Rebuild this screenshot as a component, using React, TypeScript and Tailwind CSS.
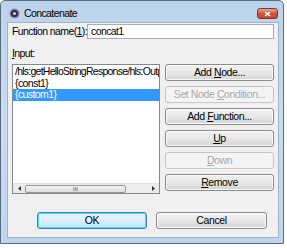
import React from "react";

const font = { fontFamily: '"Liberation Sans", Arial, sans-serif' };

function Btn({ children, disabled, def }: { children: React.ReactNode; disabled?: boolean; def?: boolean }) {
  const base =
    "h-[17px] flex items-center justify-center rounded-[3px] text-[10.5px] tracking-[-0.4px] leading-none whitespace-nowrap";
  if (disabled)
    return (
      <div className={base + " border border-[#c4c7c9] bg-[#f4f4f4] text-[#a8a8a8]"}><span>{children}</span></div>
    );
  if (def)
    return (
      <div className={base + " border border-[#3c7fb1] bg-gradient-to-b from-[#eaf6fd] via-[#d9f0fc] to-[#bee6fd] text-black shadow-[inset_0_0_0_1px_#48d8f8]"}>
        <span>{children}</span>
      </div>
    );
  return (
    <div className={base + " border border-[#8a8a8a] bg-gradient-to-b from-[#f2f2f2] via-[#e8e8e8] to-[#d4d4d4] text-black shadow-[inset_0_0_0_1px_#fcfcfc]"}>
      <span>{children}</span>
    </div>
  );
}

export default function App() {
  return (
    <div className="w-[287px] h-[248px] bg-white relative text-[10.5px] tracking-[-0.6px]" style={font}>
      <div className="w-[284px] h-[244px] flex flex-col rounded-t-[5px] border border-[#5a6b7c] bg-gradient-to-b from-[#bcd3ec] via-[#c8dcf1] to-[#bed5ee]">
        {/* title bar */}
        <div className="h-[21px] flex items-center pl-[8px] pr-[5px] shrink-0 pt-[4px]">
          <svg width="11" height="11" viewBox="0 0 11 11">
            <circle cx="5.5" cy="5.5" r="5" fill="#8a7fb0" />
            <circle cx="5.5" cy="5.5" r="3.6" fill="#2e2e3e" />
            <circle cx="5.5" cy="5.5" r="1.6" fill="#cfc6ea" />
          </svg>
          <span className="ml-[4px] text-black">Concatenate</span>
          <div className="ml-auto w-[21px] h-[11px] rounded-[3px] border border-[#7a3a2e] bg-gradient-to-b from-[#e8a493] via-[#d0543a] to-[#c8442c] flex items-center justify-center">
            <svg width="7" height="6" viewBox="0 0 7 6">
              <path d="M1 1 L6 5 M6 1 L1 5" stroke="white" strokeWidth="1.6" />
            </svg>
          </div>
        </div>
        {/* content */}
        <div className="flex-1 ml-[6px] mr-[4px] mb-[5px] bg-[#f0f0f0] border border-[#9fb4cc] flex flex-col px-[4px]">
          <div className="flex items-center mt-[1px] h-[15px]">
            <span className="text-black w-[75px] whitespace-nowrap">
              Function name(<span className="underline">1</span>):
            </span>
            <div className="flex-1 h-[15px] bg-white border border-[#ababab] flex items-center pl-[3px]">
              concat1
            </div>
          </div>
          <div className="mt-[8px] h-[13px] leading-[13px]">
            <span className="underline">I</span>nput:
          </div>
          <div className="flex mt-[4px] gap-[5px]">
            <div className="w-[148px] h-[130px] bg-white border border-[#828790] flex flex-col overflow-hidden">
              <div className="flex-1 pt-[1px] leading-[11.5px]">
                <div className="pl-[2px] whitespace-nowrap tracking-[-0.75px]">/hls:getHelloStringResponse/hls:Outp</div>
                <div className="pl-[2px]">{"{const1}"}</div>
                <div className="pl-[2px] bg-[#3399ff] text-white">{"{custom1}"}</div>
              </div>
              <div className="h-[10px] flex items-center bg-[#ececec] border-t border-[#e2e2e2]">
                <div className="w-[12px] flex justify-center">
                  <svg width="3" height="5" viewBox="0 0 3 5"><path d="M3 0 L0 2.5 L3 5Z" fill="#333" /></svg>
                </div>
                <div className="w-[101px] h-[8px] rounded-[2px] border border-[#9a9a9a] bg-gradient-to-b from-[#f4f4f4] to-[#dcdcdc] flex items-center justify-center">
                  <span className="text-[6px] tracking-normal leading-none text-[#555]">III</span>
                </div>
                <div className="flex-1 flex justify-end pr-[4px]">
                  <svg width="3" height="5" viewBox="0 0 3 5"><path d="M0 0 L3 2.5 L0 5Z" fill="#333" /></svg>
                </div>
              </div>
            </div>
            <div className="flex-1 flex flex-col gap-[5px]">
              <Btn>Add <span className="underline">N</span>ode...</Btn>
              <Btn disabled>Set Node <span className="underline">C</span>ondition...</Btn>
              <Btn>Add <span className="underline">F</span>unction...</Btn>
              <Btn><span className="underline">U</span>p</Btn>
              <Btn disabled><span className="underline">D</span>own</Btn>
              <Btn><span className="underline">R</span>emove</Btn>
            </div>
          </div>
          <div className="flex mt-[18px] pl-[25px] gap-[9px]">
            <div className="w-[110px]"><Btn def>OK</Btn></div>
            <div className="w-[111px]"><Btn>Cancel</Btn></div>
          </div>
        </div>
      </div>
    </div>
  );
}
